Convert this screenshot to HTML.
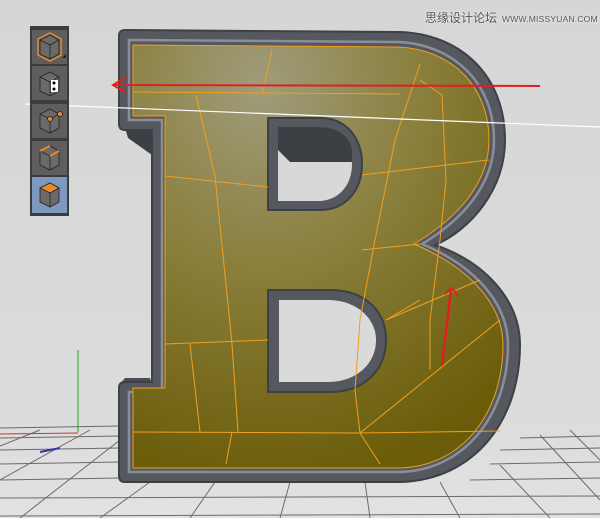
<!DOCTYPE html>
<html><head><meta charset="utf-8"><style>
html,body{margin:0;padding:0;width:600px;height:518px;overflow:hidden;background:#d9d9d9}
.wm{position:absolute;left:425px;top:9px;white-space:nowrap;font:12px "Liberation Sans","Noto Sans CJK SC",sans-serif;color:#555;text-shadow:0 0 2px #fff}
.wm span{font-size:8.5px;letter-spacing:0.2px;margin-left:5px}
</style></head><body>
<svg width="600" height="518" viewBox="0 0 600 518" style="position:absolute;left:0;top:0">
<defs>
<linearGradient id="bg" x1="0" y1="0" x2="0" y2="1"><stop offset="0" stop-color="#d6d6d6"/><stop offset="0.8" stop-color="#dcdcdc"/><stop offset="1" stop-color="#e2e2e2"/></linearGradient>
<radialGradient id="face" cx="0.35" cy="0.1" r="0.95"><stop offset="0" stop-color="#a09c7c"/><stop offset="0.45" stop-color="#8a7f3c"/><stop offset="1" stop-color="#6a5c08"/></radialGradient>
</defs>
<rect width="600" height="518" fill="url(#bg)"/>
<g stroke="#3a3a3a" stroke-width="1" fill="none" opacity="0.7">
<line x1="0" y1="428" x2="120" y2="426"/><line x1="0" y1="438" x2="120" y2="436"/><line x1="0" y1="450" x2="120" y2="448"/><line x1="0" y1="464" x2="120" y2="462"/><line x1="0" y1="480" x2="120" y2="478"/>
<line x1="0" y1="498" x2="600" y2="496"/><line x1="0" y1="516" x2="600" y2="514"/><line x1="470" y1="480" x2="600" y2="478"/><line x1="500" y1="450" x2="600" y2="448"/><line x1="490" y1="464" x2="600" y2="462"/><line x1="520" y1="438" x2="600" y2="436"/>
<line x1="0" y1="446" x2="40" y2="430"/><line x1="0" y1="480" x2="90" y2="430"/><line x1="20" y1="518" x2="120" y2="440"/><line x1="100" y1="518" x2="150" y2="482"/><line x1="190" y1="518" x2="215" y2="482"/><line x1="280" y1="518" x2="290" y2="482"/><line x1="370" y1="518" x2="365" y2="482"/><line x1="460" y1="518" x2="440" y2="482"/><line x1="550" y1="518" x2="500" y2="465"/><line x1="600" y1="500" x2="540" y2="435"/><line x1="600" y1="460" x2="570" y2="430"/>
</g>
<line x1="78" y1="350" x2="78" y2="432" stroke="#2a2" stroke-width="1"/>
<line x1="0" y1="434" x2="78" y2="433" stroke="#c33" stroke-width="1"/>
<line x1="40" y1="452" x2="60" y2="448" stroke="#33a" stroke-width="2"/>
<path d="M125 128 L152 128 L152 155 L128 138 Z" fill="#3c3f44"/>
<path d="M150 378 L125 378 L120 384 L152 384 Z" fill="#4a4d52"/>
<path d="M125 30 L400 32 C460 34 505 75 505 140 C505 190 470 230 435 245 C485 262 520 300 520 345 C520 420 475 480 400 482 L125 482 Q119 482 119 476 L119 388 Q119 382 125 382 L152 382 L152 130 L125 130 Q119 130 119 124 L119 36 Q119 30 125 30 Z" fill="#55585e" stroke="#3d4045" stroke-width="2"/>
<path d="M129 40 L398 42 C452 44 494 82 494 140 C494 185 462 220 422 244 C470 264 508 300 508 345 C508 412 467 470 400 472 L129 472 L129 392 L162 392 L162 120 L129 120 Z" fill="none" stroke="#8a8e96" stroke-width="2.5"/>
<path d="M133 45 L398 47 C450 49 489 85 489 140 C489 183 458 218 414 244 C466 266 503 302 503 345 C503 410 465 466 400 468 L133 468 L133 388 L165 388 L165 116 L133 116 Z" fill="url(#face)" stroke="#f0a020" stroke-width="1"/>
<path d="M268 118 L320 118 C348 118 362 140 362 164 C362 190 346 210 320 210 L268 210 Z" fill="#55585e" stroke="#3d4045" stroke-width="2"/>
<path d="M278 127 L318 127 C340 127 352 146 352 164 C352 186 338 201 318 201 L278 201 Z" fill="#d8d8d8"/>
<path d="M278 127 L318 127 C340 127 350 138 352 150 L352 162 L290 162 L278 150 Z" fill="#3c3f44"/>
<path d="M268 290 L330 290 C364 290 386 310 386 340 C386 370 364 392 330 392 L268 392 Z" fill="#55585e" stroke="#3d4045" stroke-width="2"/>
<path d="M279 300 L328 300 C356 300 376 318 376 340 C376 364 356 382 328 382 L279 382 Z" fill="#dadada"/>
<g stroke="#f0a020" stroke-width="1" fill="none">
<path d="M133 92 L400 94"/><path d="M165 176 L268 187"/><path d="M165 344 L268 340"/><path d="M133 432 L360 433 L500 431"/>
<path d="M196 95 L215 176 L232 344 L238 432"/><path d="M272 50 L262 95"/><path d="M190 344 L200 432"/>
<path d="M420 64 L395 140 L375 240 L360 320 L355 390 L360 433"/>
<path d="M420 80 L442 95 L446 180 L440 240"/><path d="M362 175 L489 160"/><path d="M362 250 L420 244"/>
<path d="M386 320 L480 280"/><path d="M440 240 L430 320 L430 370"/><path d="M360 433 L500 320"/>
<path d="M360 433 L380 464"/><path d="M232 432 L226 464"/><path d="M386 320 L420 300"/>
</g>
<line x1="25" y1="104" x2="600" y2="127" stroke="#fff" stroke-width="1.2"/>
<line x1="114" y1="85" x2="540" y2="86" stroke="#e02020" stroke-width="2"/>
<path d="M126 77 L113 85 L126 93" stroke="#e02020" stroke-width="2" fill="none"/>
<line x1="442" y1="366" x2="451" y2="290" stroke="#e02020" stroke-width="2.5"/>
<path d="M445 294 L452 288 L458 296" stroke="#e02020" stroke-width="2" fill="none"/>
<rect x="30" y="26" width="39" height="190" fill="#3c3c3c"/>
<rect x="32" y="30" width="35" height="34" fill="#5e5e5e"/>
<rect x="32" y="66" width="35" height="34" fill="#5e5e5e"/>
<rect x="32" y="104" width="35" height="34" fill="#5e5e5e"/>
<rect x="32" y="141" width="35" height="34" fill="#5e5e5e"/>
<rect x="32" y="177" width="35" height="36" fill="#7f98c0"/>
<path d="M62 58 L66 54 L66 58 Z" fill="#222"/>
<g stroke="#222" stroke-width="0.8">
<path d="M40 40 L50 35 L59 40 L59 54 L50 59 L40 54 Z" fill="#6a6a6a"/><path d="M40 40 L50 45 L59 40 M50 45 L50 59" fill="none"/>
<path d="M38 39 L50 33 L61 39 L61 55 L50 61 L38 55 Z" fill="none" stroke="#e8892a" stroke-width="1.5"/>
<path d="M40 77 L50 72 L59 77 L59 91 L50 96 L40 91 Z" fill="#6a6a6a"/><path d="M40 77 L50 82 L59 77 M50 82 L50 96" fill="none"/>
<rect x="51" y="80" width="7" height="12" fill="#fff" stroke="none"/><circle cx="54" cy="83" r="1.5" fill="#000" stroke="none"/><circle cx="54" cy="89" r="1.5" fill="#000" stroke="none"/>
<path d="M40 114 L50 109 L59 114 L59 128 L50 133 L40 128 Z" fill="#6a6a6a"/><path d="M40 114 L50 119 L59 114 M50 119 L50 133" fill="none"/>
<circle cx="50" cy="119" r="2.5" fill="#e8892a"/><circle cx="60" cy="114" r="2.5" fill="#e8892a"/>
<path d="M40 151 L50 146 L59 151 L59 165 L50 170 L40 165 Z" fill="#6a6a6a"/><path d="M40 151 L50 156 L59 151 M50 156 L50 170" fill="none"/>
<path d="M40 151 L50 146 M50 156 L59 151" stroke="#e8892a" stroke-width="2"/>
<path d="M40 188 L50 183 L59 188 L59 202 L50 207 L40 202 Z" fill="#6a6a6a"/><path d="M40 188 L50 183 L59 188 L50 193 Z" fill="#e8892a"/><path d="M50 193 L50 207" fill="none"/>
</g>
</svg>
<div class="wm">思缘设计论坛<span>WWW.MISSYUAN.COM</span></div>
</body></html>
